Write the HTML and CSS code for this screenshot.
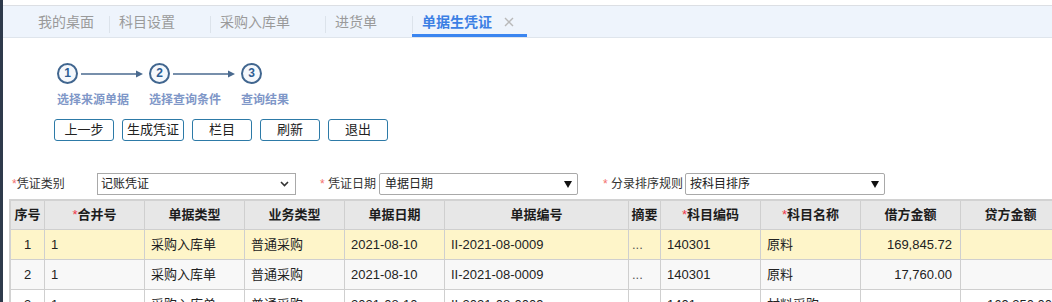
FILE: index.html
```html
<!DOCTYPE html>
<html lang="zh-CN">
<head>
<meta charset="utf-8">
<title>单据生凭证</title>
<link rel="stylesheet" href="styles.css">
</head>
<body>
<div class="app">
  <div class="side"></div>
  <div class="main">
    <div class="tabbar">
      <div class="tab first">我的桌面</div>
      <div class="tab">科目设置</div>
      <div class="tab">采购入库单</div>
      <div class="tab">进货单</div>
      <div class="tab active">单据生凭证<span class="close"><svg width="10" height="10" viewBox="0 0 10 10"><path d="M1 1L9 9M9 1L1 9" stroke="#b9b9b9" stroke-width="1.4"/></svg></span></div>
    </div>

    <div class="steps">
      <div class="step-icons">
        <div class="circle">1</div>
        <svg class="arrow" width="62" height="10" viewBox="0 0 62 10"><path d="M0 5H56" stroke="#4a6a8f" stroke-width="1.3"/><path d="M55 1.5L62 5L55 8.5Z" fill="#4a6a8f"/></svg>
        <div class="circle">2</div>
        <svg class="arrow" width="62" height="10" viewBox="0 0 62 10"><path d="M0 5H56" stroke="#4a6a8f" stroke-width="1.3"/><path d="M55 1.5L62 5L55 8.5Z" fill="#4a6a8f"/></svg>
        <div class="circle">3</div>
      </div>
      <div class="step-labels">
        <span>选择来源单据</span>
        <span>选择查询条件</span>
        <span>查询结果</span>
      </div>
    </div>

    <div class="toolbar">
      <button class="btn">上一步</button>
      <button class="btn">生成凭证</button>
      <button class="btn">栏目</button>
      <button class="btn">刷新</button>
      <button class="btn">退出</button>
    </div>

    <div class="form">
      <label class="lbl lbl-first"><span class="req">*</span>凭证类别</label>
      <div class="sel sel-native"><span>记账凭证</span><svg width="9" height="6" viewBox="0 0 9 6"><path d="M1 1L4.5 4.5L8 1" fill="none" stroke="#333" stroke-width="1.6"/></svg></div>
      <label class="lbl lbl-gap"><span class="req">*</span> 凭证日期</label>
      <div class="sel sel-tri"><span>单据日期</span><i class="tri"></i></div>
      <label class="lbl lbl-gap2"><span class="req">*</span> 分录排序规则</label>
      <div class="sel sel-tri wide"><span>按科目排序</span><i class="tri"></i></div>
    </div>

    <div class="grid">
      <table>
        <colgroup>
          <col style="width:34px"><col style="width:100px"><col style="width:100px"><col style="width:100px"><col style="width:100px"><col style="width:184px"><col style="width:32px"><col style="width:100px"><col style="width:100px"><col style="width:100px"><col style="width:100px">
        </colgroup>
        <thead>
          <tr>
            <th>序号</th><th><span class="hreq">*</span>合并号</th><th>单据类型</th><th>业务类型</th><th>单据日期</th><th>单据编号</th><th>摘要</th><th><span class="hreq">*</span>科目编码</th><th><span class="hreq">*</span>科目名称</th><th>借方金额</th><th>贷方金额</th>
          </tr>
        </thead>
        <tbody>
          <tr class="sel-row">
            <td class="c">1</td><td>1</td><td>采购入库单</td><td>普通采购</td><td>2021-08-10</td><td>II-2021-08-0009</td><td class="dots">...</td><td>140301</td><td>原料</td><td class="r">169,845.72</td><td class="r"></td>
          </tr>
          <tr class="alt">
            <td class="c">2</td><td>1</td><td>采购入库单</td><td>普通采购</td><td>2021-08-10</td><td>II-2021-08-0009</td><td class="dots">...</td><td>140301</td><td>原料</td><td class="r">17,760.00</td><td class="r"></td>
          </tr>
          <tr>
            <td class="c">3</td><td>1</td><td>采购入库单</td><td>普通采购</td><td>2021-08-10</td><td>II-2021-08-0009</td><td class="dots">...</td><td>1401</td><td>材料采购</td><td class="r"></td><td class="r">169,250.00</td>
          </tr>
        </tbody>
      </table>
    </div>
  </div>
</div>
</body>
</html>
```

FILE: styles.css
```css
* { box-sizing: border-box; }
html, body {
  margin: 0;
  padding: 0;
  width: 1052px;
  height: 302px;
  overflow: hidden;
  background: #fff;
  font-family: "Liberation Sans", "Noto Sans CJK SC", sans-serif;
  color: #222;
}
.app {
  display: flex;
  height: 302px;
}
.side {
  width: 3px;
  flex: none;
  background: #2e3a4b;
}
.main {
  flex: 1;
  min-width: 0;
  overflow: hidden;
}

/* tabs */
.tabbar {
  margin-top: 5px;
  height: 33px;
  border-top: 1px solid #dcdfe4;
  border-bottom: 1px solid #dfe5ec;
  background: #eef4fc;
  display: flex;
  padding-left: 25px;
}
.tab {
  position: relative;
  height: 31px;
  display: flex;
  align-items: center;
  padding: 0 35px 0 10px;
  font-size: 14px;
  line-height: 18px;
  color: #9a9a9a;
}
.tab::before {
  content: "";
  position: absolute;
  left: 0;
  top: 10px;
  height: 17px;
  width: 1px;
  background: #dce3eb;
}
.tab.first { padding-right: 15px; }
.tab.first::before { display: none; }
.tab.active {
  color: #3b7fe4;
  font-weight: bold;
  padding-right: 13px;
}
.tab.active::after {
  content: "";
  position: absolute;
  left: 0;
  right: 0;
  bottom: 0;
  height: 3px;
  background: #3a85f0;
}
.close {
  display: flex;
  margin-left: 12px;
  width: 10px;
  height: 10px;
}

/* steps */
.steps {
  padding-left: 54px;
}
.step-icons {
  display: flex;
  align-items: center;
  margin-top: 25px;
  height: 21px;
}
.circle {
  width: 21px;
  height: 21px;
  border: 2px solid #41668f;
  border-radius: 50%;
  background: #f5f8fc;
  color: #2d5d93;
  font-weight: bold;
  font-size: 12px;
  line-height: 17px;
  text-align: center;
  flex: none;
}
.arrow {
  margin: 0 6px 0 3px;
  flex: none;
}
.step-labels {
  display: flex;
  gap: 20px;
  margin-top: 8px;
}
.step-labels span {
  width: 72px;
  font-size: 12px;
  line-height: 16px;
  font-weight: bold;
  color: #7f97c8;
  white-space: nowrap;
}

/* toolbar */
.toolbar {
  display: flex;
  gap: 8px;
  padding-left: 51px;
  margin-top: 11px;
}
.btn {
  height: 22px;
  min-width: 60px;
  padding: 0 4px;
  border: 1px solid #2d7aa7;
  border-radius: 3px;
  background: #fff;
  font-family: "Liberation Sans", "Noto Sans CJK SC", sans-serif;
  font-size: 13px;
  line-height: 18px;
  color: #222;
}

/* form */
.form {
  display: flex;
  align-items: center;
  padding-left: 9px;
  margin-top: 32px;
  height: 22px;
}
.lbl {
  font-size: 12px;
  line-height: 16px;
  color: #333;
  white-space: nowrap;
}
.lbl-first { width: 85px; }
.lbl-gap { margin-left: 24px; width: 59px; }
.lbl-gap2 { margin-left: 25px; width: 82px; }
.req { color: #f36f6f; }
.sel {
  height: 22px;
  width: 199px;
  display: flex;
  align-items: center;
  justify-content: space-between;
  border: 1px solid #a9a9a9;
  font-size: 12px;
  line-height: 16px;
  color: #222;
}
.sel-native {
  padding: 0 6px 0 3px;
}
.sel-tri {
  border-radius: 2px;
  padding: 0 5px 0 5px;
  background: #fff;
}
.sel-tri.wide { width: 200px; padding-left: 4px; }
.tri {
  width: 0;
  height: 0;
  border-left: 4px solid transparent;
  border-right: 4px solid transparent;
  border-top: 7px solid #111;
}

/* grid */
.grid {
  margin-top: 4px;
  margin-left: 6px;
}
table {
  table-layout: fixed;
  width: 1052px;
  border-collapse: separate;
  border-spacing: 0;
  border-top: 2px solid #d2d2d2;
  border-left: 2px solid #d2d2d2;
}
th, td {
  padding: 0 6px;
  border-right: 1px solid #cfcfcf;
  border-bottom: 1px solid #cfcfcf;
  white-space: nowrap;
  overflow: hidden;
  font-size: 13px;
}
th {
  background: #e7e7e7;
  font-weight: bold;
  line-height: 28px;
  text-align: center;
  color: #1c1c1c;
  padding: 0;
}
.hreq {
  color: #f0384a;
  font-weight: normal;
}
td {
  line-height: 29px;
  color: #222;
  text-align: left;
}
td.c { text-align: center; padding: 0; }
td.r { text-align: right; padding-right: 8px; }
td.dots { padding: 0 0 0 3px; color: #555; }
tr.sel-row td { background: #fef5c9; }
tr.alt td { background: #f8f8f8; }
```
